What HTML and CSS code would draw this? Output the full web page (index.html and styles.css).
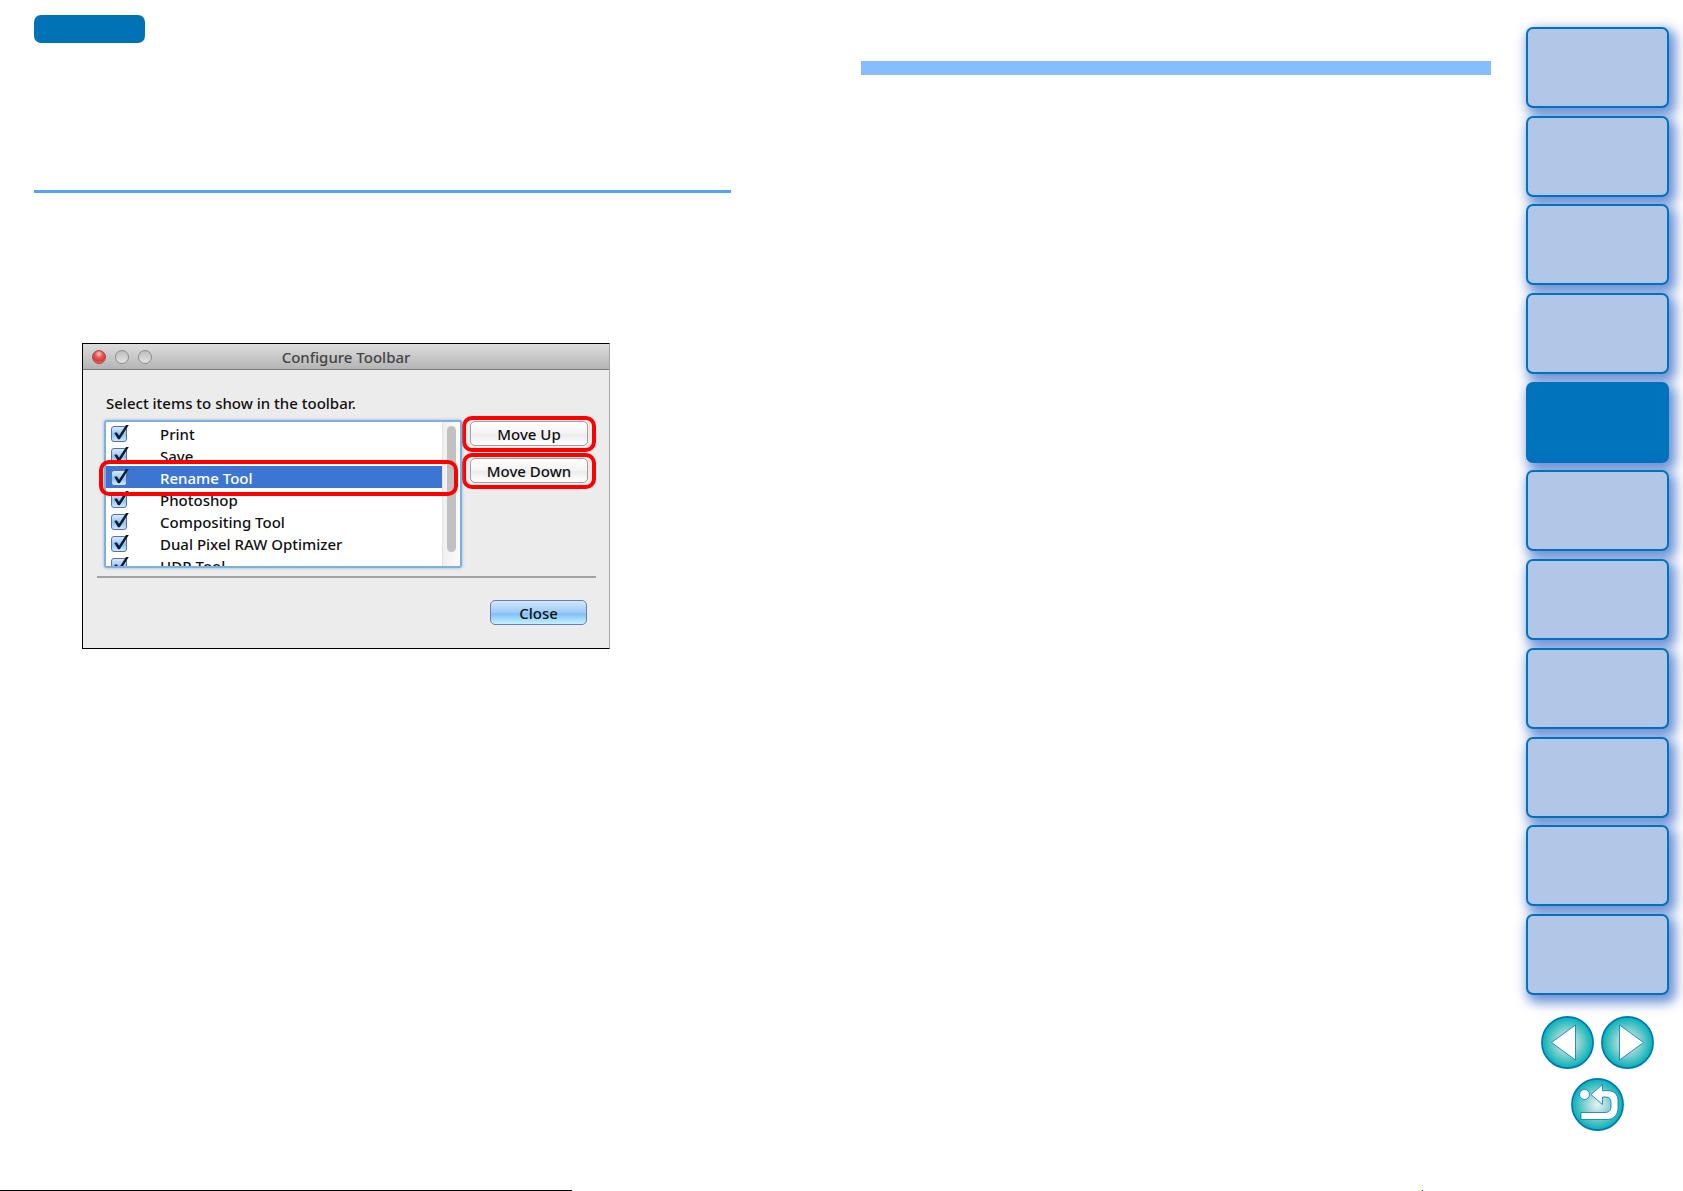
FILE: index.html
```html
<!DOCTYPE html>
<html lang="en">
<head>
<meta charset="utf-8">
<title>Configure Toolbar</title>
<link rel="stylesheet" href="styles.css">
</head>
<body>
<svg class="defs" aria-hidden="true">
  <defs>
    <radialGradient id="teal">
      <stop offset="0" stop-color="#e6f4f3"/>
      <stop offset="0.45" stop-color="#93d3d3"/>
      <stop offset="1" stop-color="#00b2b4"/>
    </radialGradient>
    <symbol id="tick" viewBox="0 0 18 18">
      <path d="M3.2 7.8 L6 7.4 L8 10.8 L15 0 L17.8 0 L8.8 14.2 L7 14.2 Z" fill="#0c1c33"/>
    </symbol>
  </defs>
</svg>
<div class="page">
  <main class="spread">
    <section class="column column-left">
      <div class="pill"></div>
      <hr class="rule">
      <div class="dialog" role="dialog" aria-labelledby="dialog-title">
        <header class="titlebar">
          <div class="lights">
            <span class="light light-close"></span>
            <span class="light"></span>
            <span class="light"></span>
          </div>
          <h1 class="title" id="dialog-title">Configure Toolbar</h1>
        </header>
        <div class="dialog-body">
          <p class="prompt">Select items to show in the toolbar.</p>
          <div class="chooser">
            <div class="list-frame">
              <div class="list">
                <ul class="items">
                  <li><label class="item"><span class="check"><input type="checkbox" checked><svg><use href="#tick"/></svg></span>Print</label></li>
                  <li><label class="item"><span class="check"><input type="checkbox" checked><svg><use href="#tick"/></svg></span>Save</label></li>
                  <li><label class="item selected"><span class="check"><input type="checkbox" checked><svg><use href="#tick"/></svg></span>Rename Tool</label></li>
                  <li><label class="item"><span class="check"><input type="checkbox" checked><svg><use href="#tick"/></svg></span>Photoshop</label></li>
                  <li><label class="item"><span class="check"><input type="checkbox" checked><svg><use href="#tick"/></svg></span>Compositing Tool</label></li>
                  <li><label class="item"><span class="check"><input type="checkbox" checked><svg><use href="#tick"/></svg></span>Dual Pixel RAW Optimizer</label></li>
                  <li><label class="item"><span class="check"><input type="checkbox" checked><svg><use href="#tick"/></svg></span>HDR Tool</label></li>
                </ul>
                <div class="track"><div class="thumb"></div></div>
              </div>
              <div class="callout row-callout"></div>
            </div>
            <div class="moves">
              <div class="callout"><button class="button" type="button">Move Up</button></div>
              <div class="callout"><button class="button" type="button">Move Down</button></div>
            </div>
          </div>
          <div class="actions">
            <button class="button button-default" type="button">Close</button>
          </div>
        </div>
      </div>
    </section>
    <section class="column column-right">
      <div class="band"></div>
    </section>
    <aside class="side">
      <nav class="tabs" aria-label="Chapters">
        <a class="tab" href="#"></a>
        <a class="tab" href="#"></a>
        <a class="tab" href="#"></a>
        <a class="tab" href="#"></a>
        <a class="tab current" href="#"></a>
        <a class="tab" href="#"></a>
        <a class="tab" href="#"></a>
        <a class="tab" href="#"></a>
        <a class="tab" href="#"></a>
        <a class="tab" href="#"></a>
        <a class="tab" href="#"></a>
      </nav>
      <nav class="pager" aria-label="Pages">
        <a href="#" aria-label="Previous page">
          <svg viewBox="0 0 53 53"><circle cx="26.5" cy="26.5" r="25.6" fill="url(#teal)" stroke="#0073bd" stroke-width="1.6"/><path d="M10.5 26.5 L34.5 9 V44 Z" fill="#fff" stroke="#0073bd" stroke-width="0.8"/></svg>
        </a>
        <a href="#" aria-label="Next page">
          <svg viewBox="0 0 53 53"><circle cx="26.5" cy="26.5" r="25.6" fill="url(#teal)" stroke="#0073bd" stroke-width="1.6"/><path d="M42.5 26.5 L18.5 9 V44 Z" fill="#fff" stroke="#0073bd" stroke-width="0.8"/></svg>
        </a>
        <a href="#" aria-label="Return">
          <svg viewBox="0 0 53 53"><circle cx="26.5" cy="26.5" r="25.6" fill="url(#teal)" stroke="#0073bd" stroke-width="1.6"/><g fill="#fff" stroke="#0073bd" stroke-width="0.8"><circle cx="13.5" cy="16.5" r="5"/><path d="M20 16.5 L31.5 6.5 V12.7 H37 C43.5 12.7 47 17 47 22.5 V30 C47 37 42.5 41.5 36 41.5 H10 V34.5 H34 C37.5 34.5 40 32.5 40 29 V24.5 C40 21 38 19 35 19 H31.5 V26.5 Z"/></g></svg>
        </a>
      </nav>
    </aside>
  </main>
  <footer class="footer"><span class="foot-line"></span><span class="foot-mark"></span></footer>
</div>
</body>
</html>
```
FILE: styles.css
```css
* {
  box-sizing: border-box;
}

body {
  margin: 0;
  background: #fff;
  color: #111;
  font: 500 15px/22px "Noto Sans", "Open Sans", sans-serif;
}

.defs {
  display: block;
  width: 0;
  height: 0;
}

.page {
  display: flex;
  flex-direction: column;
  min-height: 100vh;
}

.spread {
  flex: 1;
  display: grid;
  grid-template-columns: minmax(0, 827fr) minmax(0, 665fr) 143px;
  padding: 15px 14px 0 34px;
}

.column-left {
  padding-right: 130px;
}

.column-right {
  padding: 46px 35px 0 0;
}

.pill {
  width: 111px;
  height: 28px;
  border-radius: 7px;
  background: #0072b5;
}

.rule {
  height: 3px;
  margin: 147px 0 150px;
  border: 0;
  background: #54a4ff;
}

.band {
  height: 14px;
  background: #85beff;
}

/* Dialog window */

.dialog {
  max-width: 528px;
  margin-left: 48px;
  border: 1px solid #000;
  border-right-color: #a5a5a5;
  background: #ececec;
}

.titlebar {
  display: grid;
  grid-template-columns: 72px 1fr 72px;
  align-items: center;
  height: 26px;
  padding: 0 9px;
  border-bottom: 1px solid #7c7c7c;
  background: linear-gradient(#dedede, #b4b4b4);
}

.lights {
  display: flex;
  gap: 9px;
}

.light {
  width: 14px;
  height: 14px;
  border: 1px solid #8b8b8b;
  border-radius: 50%;
  background: linear-gradient(#bdbdbd, #e4e4e4);
}

.light-close {
  border-color: #a34a48;
  background: radial-gradient(circle at 50% 25%, #ffd0ca 0, #e95650 35%, #d93c38 65%, #f5918c 100%);
}

.title {
  margin: 0;
  color: #444;
  font-size: 15px;
  font-weight: 500;
  line-height: 22px;
  text-align: center;
}

.dialog-body {
  padding: 22px 13px 23px 14px;
}

.prompt {
  margin: 0 9px 2px;
}

.chooser {
  display: flex;
  align-items: flex-start;
  padding: 0 0 8px 7px;
  border-bottom: 2px solid #a2a2a2;
}

.list-frame {
  position: relative;
  flex: 1;
  margin-top: 4px;
}

.list {
  display: flex;
  height: 148px;
  border: 2px solid #7fb0dc;
  border-radius: 3px;
  background: #fff;
  box-shadow: 0 0 3px #7fb0dc;
  overflow: hidden;
}

.items {
  flex: 1;
  margin: 0;
  padding: 0;
  list-style: none;
}

.item {
  display: flex;
  align-items: center;
  gap: 31px;
  height: 22px;
  padding: 2px 0 0 5px;
}

.selected {
  background: #3d76d2;
  color: #fff;
}

.check {
  display: grid;
  flex: none;
  width: 18px;
}

.check input,
.check svg {
  grid-area: 1 / 1;
  width: 18px;
  height: 18px;
  margin: 0;
}

.check input {
  appearance: none;
  align-self: center;
  width: 16px;
  height: 16px;
  border: 1px solid #5d6ea6;
  border-radius: 3px;
  background: linear-gradient(#d9eafa, #8fc3f2 55%, #c9ecff);
}

.check svg {
  pointer-events: none;
}

.track {
  width: 18px;
  padding: 4px 4px 0;
  border-left: 1px solid #e2e2e2;
  background: linear-gradient(90deg, #f0f0f0, #fbfbfb);
}

.thumb {
  height: 126px;
  border-radius: 5px;
  background: #c1c1c1;
}

.callout {
  height: 36px;
  border: 4px solid #f00;
  border-radius: 10px;
}

.row-callout {
  position: absolute;
  top: 40px;
  left: -5px;
  right: 4px;
  pointer-events: none;
}

.moves {
  display: flex;
  flex-direction: column;
  gap: 1px;
  width: 134px;
}

.moves .callout {
  padding: 1px 4px 0;
}

.button {
  display: block;
  width: 100%;
  height: 25px;
  padding: 0;
  border: 1px solid #a0a0a0;
  border-radius: 5px;
  background: linear-gradient(#fff, #f3f3f3 50%, #ebebeb 52%, #fff);
  color: #111;
  font: inherit;
  line-height: 22px;
}

.button-default {
  width: 97px;
  border-color: #6f7ba9;
  background: linear-gradient(#d3e6fa, #9dcbf5 50%, #80bff5 55%, #c3f1ff);
}

.actions {
  display: flex;
  justify-content: flex-end;
  padding: 22px 9px 0 0;
}

/* Chapter tabs and page buttons */

.side {
  padding-top: 12px;
}

.tabs {
  display: flex;
  flex-direction: column;
  justify-content: space-between;
  height: 968px;
}

.tab {
  height: 81px;
  border: 2px solid #0073bd;
  border-radius: 7px;
  background: #b2c6e7;
  box-shadow: 4px 5px 12px 3px rgba(60, 110, 200, 0.75);
}

.current {
  background: #0073bd;
}

.pager {
  display: flex;
  flex-wrap: wrap;
  justify-content: center;
  gap: 9px 7px;
  padding: 21px 0;
}

.pager a,
.pager svg {
  display: block;
  width: 53px;
  height: 53px;
}

.footer {
  display: flex;
  justify-content: space-between;
  height: 1px;
}

.foot-line {
  width: 34%;
  background: #000;
}

.foot-mark {
  width: 2px;
  margin-right: 260px;
  background: linear-gradient(90deg, #ff0 50%, #00f 50%);
}
```
